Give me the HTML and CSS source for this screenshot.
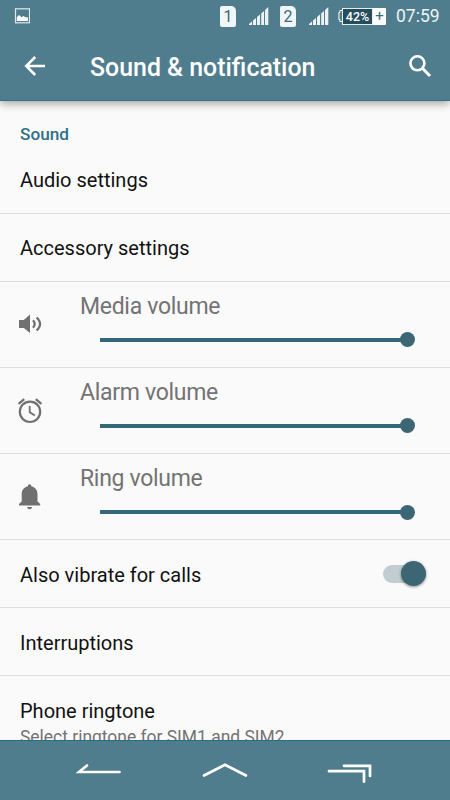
FILE: index.html
```
<!DOCTYPE html>
<html lang="en">
<head>
	<meta charset="UTF-8">
	<title>Sound &amp; notification</title>
	<link rel="stylesheet" href="styles.css">
</head>
<body>
	<div id="screen">
		<div class="header">
			<div class="statusbar">
				<svg class="picture" width="16" height="16" viewBox="0 0 16 16">
					<rect x="1.5" y=".8" width="14" height="14" fill="none" stroke="#dce8ec" stroke-width="1.2"/>
					<path d="M2.8 13V9.2L5 7.1L7.5 9.3L9.5 8.1L11.5 9.2L14 9.6V13z" fill="#fff"/>
				</svg>
				<div class="sim">1</div>
				<svg class="signal" width="20" height="20" viewBox="0 0 20 20">
					<path d="M0 19V18L3 15.5V19zM4 19V14.5L7 12V19zM8 19V11L11 8.5V19zM12.2 19V7.5L15 5V19zM16 19V4L19.3 1V19z"/>
				</svg>
				<div class="sim">2</div>
				<svg class="signal" width="20" height="20" viewBox="0 0 20 20">
					<path d="M0 19V18L3 15.5V19zM4 19V14.5L7 12V19zM8 19V11L11 8.5V19zM12.2 19V7.5L15 5V19zM16 19V4L19.3 1V19z"/>
				</svg>
				<div class="battery">
					<svg width="4" height="18" viewBox="0 0 4 18"><path d="M4 3.5H1.9V5.5H.9V12.5H1.9V14.5H4" fill="none" stroke="#fff" stroke-width="1"/></svg>
					<div class="level">42%</div>
					<div class="plus">+</div>
				</div>
				<div class="clock">07:59</div>
			</div>
			<div class="toolbar">
				<svg class="back" width="22" height="22" viewBox="0 0 22 22">
					<path d="M21 11H2.5M11.2 2L2.2 11L11.2 20" fill="none" stroke="#fff" stroke-width="2.5"/>
				</svg>
				<h1>Sound &amp; notification</h1>
				<svg class="search" width="24" height="24" viewBox="0 0 24 24">
					<circle cx="9.4" cy="9.3" r="7" fill="none" stroke="#fff" stroke-width="2.6"/>
					<path d="M14.4 14.3L22 22" fill="none" stroke="#fff" stroke-width="3"/>
				</svg>
			</div>
		</div>

		<div class="content">
			<div class="category">Sound</div>
			<div class="row first">Audio settings</div>
			<div class="row">Accessory settings</div>

			<div class="volume">
				<svg width="26" height="26" viewBox="0 0 26 26">
					<path d="M2 9H6.8L13 3.5V22L6.8 17H2z" fill="#707070"/>
					<path d="M16 9.3Q19.4 13 16 16.7M19.6 6.5Q26.6 13 19.6 19.5" fill="none" stroke="#707070" stroke-width="2.2"/>
				</svg>
				<div class="control">
					<div class="name">Media volume</div>
					<div class="track"><div class="thumb"></div></div>
				</div>
			</div>
			<div class="volume">
				<svg width="26" height="26" viewBox="0 0 26 26" fill="none" stroke="#707070">
					<circle cx="13" cy="13.8" r="10.2" stroke-width="2.2"/>
					<path d="M12.7 8V14.3L17.8 17.6" stroke-width="1.8"/>
					<path d="M1.6 5.8L7.2 1.1M24.4 5.8L18.8 1.1" stroke-width="2.3"/>
				</svg>
				<div class="control">
					<div class="name">Alarm volume</div>
					<div class="track"><div class="thumb"></div></div>
				</div>
			</div>
			<div class="volume">
				<svg width="26" height="26" viewBox="0 0 26 26" fill="#707070">
					<path d="M10.8 2.2Q10.8.2 12.6.2T14.4 2.2C18.6 3.2 20.5 6.4 20.5 10.4V17.4L23.2 20.1V21.4H2V20.1L4.7 17.4V10.4C4.7 6.4 6.6 3.2 10.8 2.2zM10 22.9H15.2Q14.6 25.2 12.6 25.2T10 22.9z"/>
				</svg>
				<div class="control">
					<div class="name">Ring volume</div>
					<div class="track"><div class="thumb"></div></div>
				</div>
			</div>

			<div class="row vibrate">
				<span>Also vibrate for calls</span>
				<div class="switch"><div class="knob"></div></div>
			</div>
			<div class="row interruptions">Interruptions</div>
			<div class="row ringtone">
				<div>Phone ringtone</div>
				<div class="summary">Select ringtone for SIM1 and SIM2</div>
			</div>
		</div>

		<div class="navbar">
			<svg width="46" height="24" viewBox="0 0 46 24">
				<path d="M43.5 13H3L11 6.5"/>
			</svg>
			<svg width="46" height="24" viewBox="0 0 46 24">
				<path d="M2 16.5L23 5.8L44 16.5"/>
			</svg>
			<svg width="46" height="24" viewBox="0 0 46 24">
				<path d="M2 12.2H37V22.7M17 6.8H43V17"/>
			</svg>
		</div>
	</div>
</body>
</html>
```

FILE: styles.css
```
* {
	box-sizing: border-box;
}

body {
	margin: 0;
	font-family: Roboto, sans-serif;
	color: #111;
}

#screen {
	display: flex;
	flex-direction: column;
	width: 450px;
	height: 800px;
	overflow: hidden;
	background-color: #fafafa;
}

/********** header **********/
.header {
	position: relative;
	z-index: 1;
	flex: none;
	height: 101px;
	color: #fff;
	background-color: #507d8d;
	border-bottom: 1px solid #3b7186;
	box-shadow: 0 2px 9px rgba(0, 0, 0, .4);
}
.statusbar {
	display: flex;
	align-items: center;
	height: 32px;
	padding: 0 10px 0 14px;
}
.picture {
	margin-right: auto;
}
.sim {
	width: 16px;
	height: 21px;
	margin-right: 13px;
	border-radius: 2px 5px 2px 2px;
	background-color: #f0f5f6;
	color: #396b7c;
	font-size: 16px;
	line-height: 22px;
	text-align: center;
}
.signal {
	margin-right: 11px;
	fill: #edf3f5;
}
.signal + .battery {
	margin-left: -2px;
}
.battery {
	display: flex;
	align-items: center;
	width: 48px;
	height: 18px;
	margin-right: 10px;
}
.level {
	width: 31px;
	height: 17px;
	border: 1px solid #e4edf0;
	background-color: #264d5b;
	font-size: 12.5px;
	font-weight: 500;
	line-height: 15px;
	text-align: center;
}
.plus {
	width: 13px;
	height: 17px;
	border-radius: 0 1px 1px 0;
	background-color: #fff;
	color: #396b7c;
	font-size: 15px;
	line-height: 17px;
	text-align: center;
}
.clock {
	width: 44px;
	font-size: 17.5px;
	line-height: 34px;
	color: #edf3f5;
}
.toolbar {
	display: flex;
	align-items: center;
	height: 68px;
	padding: 0 18px 0 24px;
}
.toolbar h1 {
	margin: 4px auto 0 44px;
	font-size: 24.9px;
	font-weight: 500;
	line-height: 30px;
}

/********** list **********/
.content {
	flex: 1;
	min-height: 0;
	overflow: hidden;
}
.category {
	height: 46px;
	padding: 22px 20px 0;
	color: #2f7186;
	font-size: 17.2px;
	font-weight: 500;
	line-height: 22px;
}
.row {
	display: flex;
	justify-content: space-between;
	align-items: center;
	height: 67.8px;
	padding: 1px 24px 0 20px;
	border-bottom: 1px solid #dedede;
	font-size: 20px;
	line-height: 24px;
}
.row.first {
	height: 67px;
	padding-top: 0;
}
.row.vibrate,
.row.interruptions {
	padding-top: 2px;
}
.volume {
	display: flex;
	align-items: center;
	height: 86.2px;
	padding-left: 17px;
	border-bottom: 1px solid #dedede;
}
.control {
	flex: 1;
	align-self: stretch;
	padding: 11px 36px 0 37px;
}
.name {
	color: #737373;
	font-size: 23px;
	letter-spacing: -.3px;
	line-height: 28px;
}
.track {
	display: flex;
	justify-content: flex-end;
	align-items: center;
	height: 4px;
	margin: 17px 0 0 20px;
	background-color: #33677a;
}
.thumb {
	width: 15px;
	height: 15px;
	margin-right: -1px;
	border-radius: 50%;
	background-color: #3d6675;
}
.switch {
	display: flex;
	justify-content: flex-end;
	align-items: center;
	width: 43px;
	height: 18px;
	margin-top: -2px;
	border-radius: 9px;
	background-color: #c1cdd1;
}
.knob {
	width: 25px;
	height: 25px;
	border-radius: 50%;
	background-color: #3d6675;
	box-shadow: 0 1px 3px rgba(0, 0, 0, .45);
}
.ringtone {
	display: block;
	height: 90px;
	padding-top: 23px;
}
.summary {
	margin-top: 2px;
	color: #737373;
	font-size: 17.45px;
}

/********** navigation **********/
.navbar {
	display: flex;
	flex: none;
	justify-content: space-between;
	height: 60px;
	padding: 18px 77px 0 76px;
	border-top: 1px solid #2c6b82;
	background-color: #507d8d;
}
.navbar path {
	fill: none;
	stroke: #fff;
	stroke-width: 2.7;
	stroke-linecap: round;
}
```
